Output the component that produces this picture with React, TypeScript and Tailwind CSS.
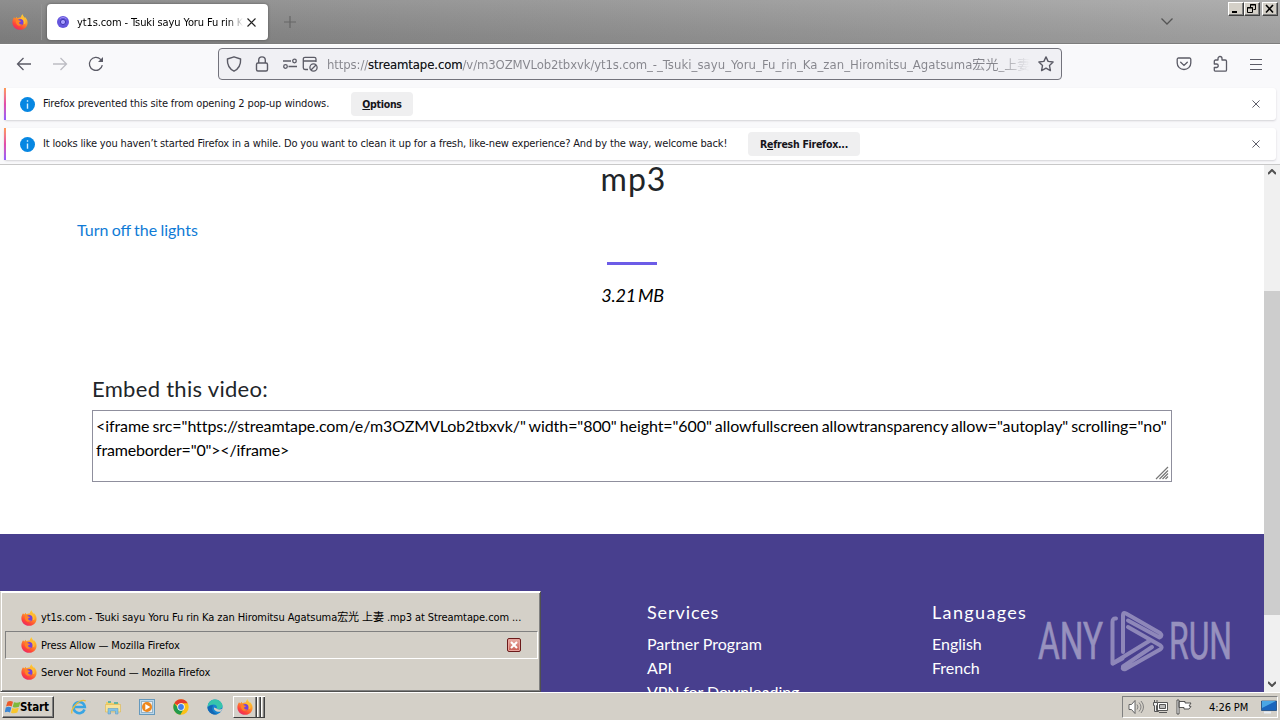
import type { ReactNode } from "react";

const UI = "font-['DejaVu_Sans_Condensed','DejaVu_Sans','Noto_Sans_CJK_JP',sans-serif] [font-stretch:condensed]";
const LATO = "font-[Lato,sans-serif]";

function Firefox({ className = "size-4" }: { className?: string }) {
  return (
    <svg viewBox="0 0 16 16" className={className}>
      <defs>
        <linearGradient id="fx" x1="0.8" y1="0" x2="0.2" y2="1">
          <stop offset="0" stopColor="#ffde3c" />
          <stop offset="0.4" stopColor="#ff9327" />
          <stop offset="0.75" stopColor="#ff4439" />
          <stop offset="1" stopColor="#e32373" />
        </linearGradient>
      </defs>
      <path d="M2 3.2 3.3 4.6 4.6 2.8 5.4 4.2C6.8 3.2 8.2 3.4 8.8 3.6 9 2 9.8 1 10.8.3 10.9 2.1 12 2.7 12.8 3.8L13.2 3.3C15 5.2 15.9 7.3 15.5 9.7 15 13.3 12 15.8 8 15.8 3.6 15.8.4 12.6.4 8.5.4 6.5 1 4.8 2 3.2Z" fill="url(#fx)" />
      <circle cx="8.5" cy="8.200" r="3.100" fill="#7542d9" />
      <path d="M3.8 6.2C5.2 5.3 6.6 5.6 7.4 6.5L9 7C8.700 7.900 7.600 8.100 7 8.600 6.900 10.100 8.700 10.800 10.200 10.200 8.600 13 3.400 11.900 3.800 6.200Z" fill="#ff8327" />
      <path d="M8.800 3.900C11.800 4.300 13.500 7 12.300 9.800" stroke="#ffbd33" strokeWidth="1.8" fill="none" />
    </svg>
  );
}

function Close({ className = "size-[9px]" }: { className?: string }) {
  return (
    <svg viewBox="0 0 9 9" className={className} fill="none" stroke="currentColor" strokeWidth="1.1">
      <path d="M.5.5l8 8M8.5.5l-8 8" />
    </svg>
  );
}

function TitleBar() {
  return (
    <div className="flex h-11 shrink-0 border-b border-[#7d7d7d] bg-linear-to-r from-[#828282] via-[#929292] to-[#a6a6a6]">
      <div className="flex h-full w-full bg-linear-to-b from-white/10 to-black/5">
        <div className="mt-1 flex h-[36px] w-[42px] items-center justify-end border-r border-[#929292] pr-[13px]">
          <Firefox />
        </div>
        <div className="mt-1 ml-[5px] flex h-9 w-[221px] items-center rounded-[4px] bg-white pl-[10px] shadow-[0_0_3px_rgba(0,0,0,0.4)]">
          <svg viewBox="0 0 12 12" className="size-3">
            <circle cx="6" cy="6" r="6" fill="#6455dd" />
            <circle cx="6" cy="6" r="2.6" fill="#a79fff" stroke="#4138ae" />
            <path d="M2.5 3Q6-.2 9.5 3" stroke="#9d8cf0" fill="none" />
          </svg>
          <div className={`${UI} mt-[2px] ml-[8px] w-[166px] overflow-hidden bg-linear-to-r from-black from-[91%] to-transparent bg-clip-text text-[11px] leading-[18px] tracking-[-0.120px] whitespace-nowrap text-transparent`}>
            yt1s.com - Tsuki sayu Yoru Fu rin Ka zan
          </div>
          <Close className="ml-[4px] size-[9px] text-[#222]" />
        </div>
        <svg viewBox="0 0 12 12" className="mt-[16px] ml-4 size-3" stroke="#666" strokeWidth="1.2">
          <path d="M6 0v12M0 6h12" />
        </svg>
        <svg viewBox="0 0 12 7" className="mt-[18px] ml-[865px] h-[7px] w-3" fill="none" stroke="#555" strokeWidth="1.3">
          <path d="M.5.5 6 6 11.5.5" />
        </svg>
        <div className="mt-[2px] ml-[55px] flex text-black">
          <WinButton><path d="M3 8h5v2H3z" fill="#000" /></WinButton>
          <WinButton>
            <path d="M5.500 4.500V1.500h5v5H8.500M5 2h6M2.500 4.500h5v5h-5zM2 5h6" fill="none" stroke="#000" />
          </WinButton>
          <span className="w-[2px]" />
          <WinButton><path d="M3 2l7 7.500M10 2l-7 7.500" stroke="#000" strokeWidth="1.6" /></WinButton>
        </div>
      </div>
    </div>
  );
}

function WinButton({ children }: { children: ReactNode }) {
  return (
    <div className="h-[14px] w-4 border border-t-white border-r-[#404040] border-b-[#404040] border-l-white bg-[#d4d0c8] shadow-[inset_-1px_-1px_0_#808080]">
      <svg viewBox="0 0 14 12" className="h-3 w-[14px]">{children}</svg>
    </div>
  );
}

function Toolbar() {
  return (
    <div className="flex h-11 shrink-0 items-center border-t border-white bg-[#f9f9fb] pb-[5px] text-[#5b5b66]">
      <svg viewBox="0 0 16 16" className="ml-4 size-4" fill="none" stroke="currentColor" strokeWidth="1.3">
        <path d="M15 8H1.5M7.5 2l-6 6 6 6" />
      </svg>
      <svg viewBox="0 0 16 16" className="ml-5 size-4" fill="none" stroke="#bdbdc3" strokeWidth="1.3">
        <path d="M1 8h13.5M8.5 2l6 6-6 6" />
      </svg>
      <svg viewBox="0 0 16 16" className="ml-5 size-4" fill="none" stroke="currentColor" strokeWidth="1.3">
        <path d="M14.3 9.2A6.5 6.5 0 1 1 12.6 3.4L14 4.8" />
        <path d="M15 1v5h-5z" fill="currentColor" stroke="none" />
      </svg>
      <div className="ml-[114px] flex h-8 w-[844px] items-center rounded-[4px] border border-[#73737c] bg-[#f0f0f4]">
        <svg viewBox="0 0 16 16" className="ml-[7px] size-4" fill="none" stroke="currentColor" strokeWidth="1.4">
          <path d="M8 .8 14.6 3c.3 5.8-1.3 9.5-6.6 12.2C2.7 12.500 1.100 8.800 1.400 3z" strokeLinejoin="round" />
        </svg>
        <svg viewBox="0 0 16 16" className="ml-3 size-4" fill="none" stroke="currentColor" strokeWidth="1.4">
          <rect x="2.500" y="7" width="11" height="8" rx="1.500" />
          <path d="M4.700 7V4.200a3.300 3.300 0 0 1 6.600 0V7" />
        </svg>
        <svg viewBox="0 0 16 14" className="ml-3 h-[14px] w-4" fill="none" stroke="currentColor" strokeWidth="1.300">
          <path d="M1 4h8M6.500 9.500H15" />
          <circle cx="12.500" cy="4" r="1.800" />
          <circle cx="3.500" cy="9.500" r="1.800" />
        </svg>
        <svg viewBox="0 0 16 16" className="ml-1 size-4" fill="none" stroke="currentColor" strokeWidth="1.300">
          <path d="M6 13.500H3A1.700 1.700 0 0 1 1.300 11.800V3A1.700 1.700 0 0 1 3 1.300H12.300A1.700 1.700 0 0 1 14 3V6M1.300 5H14" />
          <circle cx="11.500" cy="11.500" r="3.600" />
          <path d="M9 14l5-5" />
        </svg>
        <div className={`${UI} mt-px ml-[9px] w-[703px] overflow-hidden bg-linear-to-r from-[#85858c] from-[95%] to-transparent bg-clip-text text-[13px] leading-5 tracking-[-0.110px] whitespace-nowrap text-transparent`}>
          https://<span className="text-[#15141a]">streamtape.com</span>/v/m3OZMVLob2tbxvk/yt1s.com_-<span className="tracking-[0.040px]">_Tsuki_sayu_Yoru_Fu_rin_Ka_zan_Hiromitsu_Agatsuma宏光_上妻</span>
        </div>
        <svg viewBox="0 0 16 16" className="ml-2 size-4" fill="none" stroke="currentColor" strokeWidth="1.400" strokeLinejoin="round">
          <path d="M8 .9 10.100 5.400 15.100 6 11.500 9.500 12.400 14.600 8 12.200 3.600 14.600 4.500 9.500.9 6 5.900 5.400Z" />
        </svg>
      </div>
      <svg viewBox="0 0 16 16" className="ml-[114px] size-4" fill="none" stroke="currentColor" strokeWidth="1.300">
        <path d="M2.500 2h11A1.300 1.300 0 0 1 14.800 3.300V7a6.800 6.500 0 0 1-13.600 0V3.300A1.300 1.300 0 0 1 2.500 2Z" />
        <path d="M4.700 6.200 8 9.400l3.300-3.200" strokeLinecap="round" />
      </svg>
      <svg viewBox="0 0 16 18" className="ml-5 h-[18px] w-4" fill="none" stroke="currentColor" strokeWidth="1.300" strokeLinejoin="round">
        <path d="M6 5V3.500a2 2 0 0 1 4 0V5h3.300A1.200 1.200 0 0 1 14.500 6.200V15a1.200 1.200 0 0 1-1.200 1.200H3.500A1.200 1.200 0 0 1 2.300 15V12.500H4.500a1.700 1.700 0 0 0 0-3.500H2.300V6.200A1.200 1.200 0 0 1 3.500 5Z" />
      </svg>
      <svg viewBox="0 0 12 11" className="ml-[22px] h-[11px] w-3" stroke="currentColor" strokeWidth="1.200">
        <path d="M0 .5h12M0 5.500h12M0 10.500h12" />
      </svg>
    </div>
  );
}

function Notice({ text, button }: { text: ReactNode; button: ReactNode }) {
  return (
    <div className="mr-1 ml-1 flex h-8 items-center rounded-[3px] bg-white shadow-[0_1px_2px_rgba(58,57,68,0.2)]">
      <div className="h-full w-[2px] bg-linear-to-b from-[#ff9a52] via-[#e34aa9] to-[#9059ff]" />
      <svg viewBox="0 0 16 16" className="ml-[14px] size-[15px]">
        <circle cx="8" cy="8" r="8" fill="#0787e2" />
        <path d="M8 3.500v1.600M8 6.800v5.700" stroke="#d8f0ff" strokeWidth="1.500" />
      </svg>
      {text}
      {button}
      <Close className="mr-[16px] ml-auto size-[8px] text-[#5b5b66]" />
    </div>
  );
}

function Page() {
  return (
    <div className={`${LATO} flex h-[527px] shrink-0 overflow-hidden`}>
      <div className="flex w-[1264px] flex-col overflow-hidden bg-white">
        <h1 className="-mt-[6px] ml-[3px] h-10 shrink-0 text-center text-[32px] leading-10 tracking-[1px] text-[#212529]">mp3</h1>
        <a className="mt-[19px] ml-[77px] h-6 shrink-0 text-[16px] leading-6 text-[#0f7bd6] [word-spacing:-0.9px]">Turn off the lights</a>
        <div className="mx-auto mt-5 h-[3px] w-[50px] shrink-0 bg-[#6c5ce7]" />
        <p className="mt-[16px] ml-px h-7 shrink-0 text-center text-[18px] leading-7 tracking-[-0.2px] text-black italic [word-spacing:-2px]">3.21 MB</p>
        <h4 className="mt-[64px] ml-[92px] h-8 shrink-0 text-[22px] leading-8 tracking-[0.3px] text-[#212529]">Embed this video:</h4>
        <div className="mt-[5px] ml-[92px] flex h-[72px] w-[1080px] shrink-0 border border-[#8f8f9d]">
          <p className="mt-[3px] ml-[3px] w-[1059px] shrink-0 text-[16px] leading-6 tracking-[-0.075px] whitespace-nowrap text-black [word-spacing:-1px]">
            {'<iframe src="https://streamtape.com/e/m3OZMVLob2tbxvk/" width="800" height="600" allowfullscreen allowtransparency allow="autoplay" scrolling="no"'}
            <br />
            <span className="tracking-[-0.190px]">{'frameborder="0"></iframe>'}</span>
          </p>
          <svg viewBox="0 0 14 14" className="mt-auto mb-[1px] h-[14px] w-[14px]" stroke="#777" strokeWidth="1.200">
            <path d="M1 13 13 1M4.500 13 13 4.500M7.500 13 13 7.500M10.500 13 13 10.500" />
          </svg>
        </div>
        <footer className="mt-[52px] flex h-[158px] shrink-0 bg-[#483f8e] pt-[66px] pl-[647px] text-[16px] leading-6 text-white">
          <section className="w-[285px]">
            <h5 className="mb-[8px] h-6 text-[18px] tracking-[0.900px]">Services</h5>
            <p>Partner Program</p>
            <p>API</p>
            <p className="tracking-[-0.100px] whitespace-nowrap">VPN for Downloading</p>
          </section>
          <section>
            <h5 className="mb-[8px] h-6 text-[18px] tracking-[1.350px]">Languages</h5>
            <p>English</p>
            <p>French</p>
          </section>
        </footer>
      </div>
      <div className="flex w-4 flex-col items-center bg-[#f0f0f0]">
        <svg viewBox="0 0 8 6" className="mt-1 h-[6px] w-2" fill="none" stroke="#505050" strokeWidth="2"><path d="M0 5l4-4 4 4" /></svg>
        <div className="mt-[116px] h-[324px] w-full bg-[#cdcdcd]" />
        <svg viewBox="0 0 8 6" className="mt-auto mb-[5px] h-[6px] w-2" fill="none" stroke="#505050" strokeWidth="2"><path d="M0 1l4 4 4-4" /></svg>
      </div>
    </div>
  );
}

function Watermark() {
  return (
    <svg viewBox="0 0 200 70" className="absolute top-[606px] left-[1035px] h-[70px] w-[200px]">
      <g fill="#9791be" stroke="#9791be" strokeWidth="0.7" fontFamily="Roboto, sans-serif" fontSize="52">
        <text x="3" y="53" textLength="65" lengthAdjust="spacingAndGlyphs">ANY</text>
        <text x="134" y="53" textLength="63" lengthAdjust="spacingAndGlyphs">RUN</text>
      </g>
      <g fill="none" stroke="#8e87b9" strokeWidth="4" strokeLinejoin="round" strokeLinecap="round">
        <path d="M81 12.500Q77.500 12 77.500 16V57.500L115 34.500" />
        <path d="M88 46V9Q88 6 91 7.500L125 27Q128 30 124.500 31.500L93 14.500" />
        <path d="M78 57.500 87.500 52.500" />
        <path d="M93 21 125.500 39.500Q128 41.500 125 43.500L90.500 63Q87 64 88 60.500L117 41" />
      </g>
    </svg>
  );
}

function WindowList() {
  return (
    <div className={`${UI} absolute top-[591px] left-0 h-[101px] w-[541px] border border-t-white border-r-[#505050] border-b-[#505050] border-l-[#d4d0c8] bg-[#d4d0c8] pt-[11px] pr-[2px] pl-[4px] text-[11px] text-black shadow-[inset_1px_1px_0_#fff,inset_-1px_-1px_0_#808080]`}>
      <div className="flex h-[28px] items-center border border-transparent pt-[2px] pl-[15px]">
        <Firefox />
        <span className="ml-[4px] tracking-[-0.085px] whitespace-nowrap">yt1s.com - Tsuki sayu Yoru Fu rin Ka zan Hiromitsu Agatsuma宏光 上妻 .mp3 at Streamtape.com ...</span>
      </div>
      <div className="flex h-[28px] items-center border border-t-[#808080] border-r-white border-b-white border-l-[#808080] pl-[15px]">
        <Firefox />
        <span className="mt-[2px] ml-[4px] tracking-[-0.1px]">Press Allow — Mozilla Firefox</span>
        <div className="mr-4 ml-auto flex size-[14px] items-center justify-center rounded-[2px] border border-[#6b1a1a] bg-linear-to-b from-[#e9b0a8] to-[#c75a50] shadow-[inset_0_0_0_1px_#e8a49e]">
          <svg viewBox="0 0 8 8" className="size-2" stroke="#fff" strokeWidth="2"><path d="M1 1l6 6M7 1 1 7" /></svg>
        </div>
      </div>
      <div className="flex h-[26px] items-center border border-transparent pl-[15px]">
        <Firefox />
        <span className="mt-[2px] ml-[4px] tracking-[-0.09px]">Server Not Found — Mozilla Firefox</span>
      </div>
    </div>
  );
}

function Taskbar() {
  return (
    <div className={`${UI} flex h-7 shrink-0 border-t border-white bg-[#d4d0c8] text-[11px] text-black`}>
      <div className="mt-[3px] ml-[2px] flex h-[22px] w-[52px] items-center border border-t-white border-r-[#404040] border-b-[#404040] border-l-white pl-[2px] shadow-[inset_-1px_-1px_0_#808080]">
        <svg viewBox="0 0 16 14" className="h-[14px] w-4">
          <path d="M2.500 1.800Q5 .3 8 1.800L6.700 6.500Q4 5.200 1 6.500Z" fill="#ec5a2a" />
          <path d="M9 2.300Q12 3.500 15.500 1.800L14 6.700Q11 8 7.700 6.900Z" fill="#7db93c" />
          <path d="M.8 7.400Q3.600 6.200 6.400 7.500L5 12.400Q2.600 11-.3 12.300Z" fill="#3a86d4" />
          <path d="M7.300 8Q10.500 9.200 13.800 7.700L12.300 12.500Q9 14 6 12.700Z" fill="#f8c62c" />
        </svg>
        <span className="mt-[2px] -ml-px text-[11.500px] font-bold tracking-[-0.1px]">Start</span>
      </div>
      <div className="mt-[6px] ml-[17px] flex gap-[18px]">
        <svg viewBox="0 0 16 16" className="size-4" fill="none">
          <path d="M13.500 10.500A5.600 5.600 0 1 1 13.800 8H4" stroke="#39a5e3" strokeWidth="2.600" />
          <path d="M1 14.500C-.5 11 7-.5 14.800 1.800" stroke="#e9bd3b" strokeWidth="1.300" />
        </svg>
        <svg viewBox="0 0 16 16" className="size-4">
          <path d="M1 3h5l1 1h7v4H1z" fill="#eecf68" /><path d="M3 2h3v2H3zM9 3h4v2H9z" fill="#63b4a0" />
          <path d="M.5 5.500h15V13H.5z" fill="#f6e39b" stroke="#dbb64f" strokeWidth=".6" />
          <path d="M3 15V9.500h10V15h-2.500v-3h-5v3z" fill="#84c3e6" stroke="#5494c0" strokeWidth=".5" />
        </svg>
        <svg viewBox="0 0 16 16" className="size-4">
          <rect x=".5" y=".5" width="15" height="15" fill="#bcd7ea" stroke="#6599bd" />
          <rect x="2.500" y="2.500" width="11" height="11" fill="#eee" stroke="#94b3c7" />
          <circle cx="8" cy="8" r="5" fill="#ed871d" /><path d="M6.300 5v6l5-3z" fill="#fff" />
        </svg>
        <svg viewBox="0 0 16 16" className="size-4">
          <circle cx="8" cy="8" r="7.700" fill="#fbc116" />
          <path d="M8 8 1.300 4.200A7.700 7.700 0 0 1 14.700 4.200H8Z" fill="#e33b2e" />
          <path d="M1.300 4.200A7.700 7.700 0 0 0 7.300 15.700L10.700 10 4.800 8.500Z" fill="#229a4c" />
          <circle cx="8" cy="8" r="3.700" fill="#fff" /><circle cx="8" cy="8" r="2.900" fill="#4280e8" />
        </svg>
        <svg viewBox="0 0 16 16" className="size-4">
          <circle cx="8" cy="8" r="7.600" fill="#1784cf" />
          <path d="M1 6C2.500-.8 12.500-1.500 15.300 5.500 16.500 9 12.500 11 9.500 9.800 11 7.500 9 5.500 6.500 5.500 4 5.500 2 6.500.7 8.500Z" fill="#36c5ac" />
          <path d="M9.500 9.600C11 11 14 10.500 15.500 9.500L14 12.500C10 13.500 6.500 11.500 7 8.500Z" fill="#d4d0c8" />
          <path d="M6.500 6.500C3.500 9 6 14.500 10.500 15 6 17 .8 13 .5 8.500 2 6.500 4 6 6.500 6.500Z" fill="#1467b4" />
        </svg>
      </div>
      <div className="mt-[3px] ml-[10px] flex h-[22px] w-[32px] border-t border-b border-l border-t-white border-b-[#404040] border-l-white">
        <div className="flex w-[23px] items-center justify-center border-r border-[#404040] shadow-[inset_-1px_0_0_#808080]"><Firefox /></div>
        <div className="w-1 border-r border-l border-r-[#404040] border-l-white shadow-[inset_-1px_0_0_#808080]" />
        <div className="w-1 border-r border-l border-r-[#404040] border-l-white shadow-[inset_-1px_0_0_#808080]" />
      </div>
      <div className="mt-[3px] mr-[2px] ml-auto flex h-[22px] w-[156px] items-center border border-t-[#808080] border-r-white border-b-white border-l-[#808080] pl-[5px]">
        <svg viewBox="0 0 16 16" className="size-4" fill="#fff" stroke="#555" strokeWidth=".9">
          <path d="M1 5.500h2.500L7 1.500v13l-3.500-4H1z" /><path d="M9 5.500q2 2.500 0 5M11 3.500q4 4.500 0 9M13 2q5 6 0 12" fill="none" stroke="#777" />
        </svg>
        <svg viewBox="0 0 17 16" className="ml-2 h-4 w-[17px]" fill="#eee" stroke="#555">
          <path d="M5.500 3.500h10v8h-10z" fill="#fff" /><path d="M7.500 5.500h6v4h-6z" fill="#bbb" /><path d="M7 13.500h8" />
          <path d="M1.500 3.500h4v3h-1v5h2v1h-4v-6h-1zM2.500 1v2M5 1v2" />
        </svg>
        <svg viewBox="0 0 16 16" className="ml-[7px] size-4" fill="#fff" stroke="#444" strokeWidth=".9">
          <path d="M1 1h2v14H1zM3 2.500h6v1.500h6l-2 3 2 .5-2 2.500H8V8.500H3z" />
        </svg>
        <span className="mt-[2px] ml-[17px] tracking-[-0.1px] whitespace-nowrap">4:26 PM</span>
        <svg viewBox="0 0 16 14" className="mr-0 ml-auto h-[14px] w-4">
          <path d="M.5 1h15v9.500H.5z" fill="#1a65bd" stroke="#164274" strokeWidth=".7" /><path d="M1 1h14L1 8z" fill="#4aa6e5" /><path d="M3 12.500h7" stroke="#e7edf4" strokeWidth="2" />
        </svg>
      </div>
    </div>
  );
}

export default function App() {
  return (
    <div className="relative flex h-[720px] w-[1280px] flex-col overflow-hidden bg-white">
      <TitleBar />
      <Toolbar />
      <div className={`${UI} flex h-[77px] shrink-0 flex-col gap-2 border-b border-[#c8c8c8] bg-[#f9f9fb] text-[11px] text-[#15141a]`}>
        <Notice
          text={<span className="ml-2 w-[287px] shrink-0 tracking-[-0.140px] whitespace-nowrap">Firefox prevented this site from opening 2 pop-up windows.</span>}
          button={<button className="ml-[21px] h-6 w-[62px] rounded-[4px] bg-[#efeff0] pt-[2px] text-[10.500px] font-bold tracking-[-0.300px]"><u>O</u>ptions</button>}
        />
        <Notice
          text={<span className="ml-2 w-[684px] shrink-0 tracking-[-0.147px] whitespace-nowrap">It looks like you haven’t started Firefox in a while. Do you want to clean it up for a fresh, like-new experience? And by the way, welcome back!</span>}
          button={<button className="ml-[21px] h-6 w-[112px] rounded-[4px] bg-[#efeff0] pt-[2px] text-[10.500px] font-bold tracking-[-0.260px]">R<u>e</u>fresh Firefox...</button>}
        />
      </div>
      <Page />
      <Watermark />
      <WindowList />
      <Taskbar />
    </div>
  );
}
